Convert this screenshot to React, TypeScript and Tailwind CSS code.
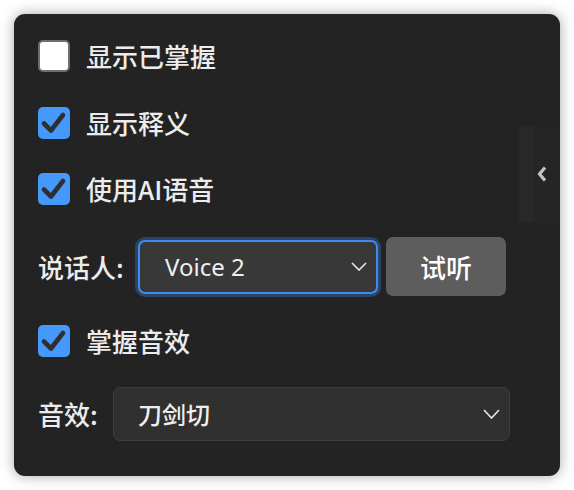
import React, { useState } from 'react';

const CheckRow = ({ label, checked }: { label: string; checked: boolean }) => (
  <label className="flex items-center gap-4 h-8">
    {checked ? (
      <span className="w-8 h-8 rounded-[5px] bg-[#4499fb] flex items-center justify-center">
        <svg width="32" height="32" viewBox="0 0 32 32">
          <polyline points="6,16.5 13,23.5 25,8" fill="none" stroke="#2f2f2f" strokeWidth="4.6" strokeLinecap="round" strokeLinejoin="round" />
        </svg>
      </span>
    ) : (
      <span className="w-8 h-8 rounded-[5px] bg-white border-2 border-[#6e6e6e]" />
    )}
    <span className="text-[26px] leading-none font-medium text-[#ececec]">{label}</span>
  </label>
);

const Chevron = ({ w, h }: { w: number; h: number }) => (
  <svg width={w} height={h} viewBox={`0 0 ${w} ${h}`}>
    <polyline points={`1,1 ${w / 2},${h - 1} ${w - 1},1`} fill="none" stroke="#e2e2e2" strokeWidth="1.7" />
  </svg>
);

export default function App() {
  const [voice] = useState('Voice 2');
  const [effect] = useState('刀剑切');

  return (
    <div className="w-[574px] h-[490px] bg-white p-[14px] font-['Noto_Sans_CJK_SC','Noto_Sans',sans-serif]">
      <div className="relative w-[546px] h-[462px] rounded-[11px] bg-[#232323] shadow-[0_0_14px_rgba(0,0,0,0.35)] pl-6 pt-[26px]">
        <CheckRow label="显示已掌握" checked={false} />
        <div className="mt-[35px]">
          <CheckRow label="显示释义" checked />
        </div>
        <div className="mt-[34px]">
          <CheckRow label="使用AI语音" checked />
        </div>

        <div className="mt-[32px] flex items-center h-[59px]">
          <span className="text-[26px] leading-none font-medium text-[#ececec] w-[100px]">说话人:</span>
          <div className="w-[240px] h-[54px] rounded-[7px] border-2 border-[#3d8bf0] ring-[3px] ring-[#2a4463] bg-[#383838] flex items-center pl-[25px] pr-[9px]">
            <span className="flex-1 text-[24px] text-[#eeeeee] font-['Noto_Sans',sans-serif]">{voice}</span>
            <Chevron w={16} h={9} />
          </div>
          <button className="ml-2 w-[120px] h-[59px] rounded-[7px] bg-[#5d5d5d] text-[26px] font-medium text-white">试听</button>
        </div>

        <div className="mt-[29px]">
          <CheckRow label="掌握音效" checked />
        </div>

        <div className="mt-[30px] flex items-center">
          <span className="text-[26px] leading-none font-medium text-[#ececec] w-[75px]">音效:</span>
          <div className="w-[397px] h-[54px] rounded-[7px] border border-[#3e3e3e] bg-[#303030] flex items-center pl-[24px] pr-[9px]">
            <span className="flex-1 text-[24px] font-medium text-[#eeeeee]">{effect}</span>
            <Chevron w={17} h={10} />
          </div>
        </div>

        <div className="absolute right-0 top-[112px] w-[42px] h-[96px] flex">
          <div className="w-4 h-full bg-[#282828]" />
          <div className="flex-1 h-full bg-[#252525] flex items-center justify-start pl-[3px]">
            <svg width="10" height="16" viewBox="0 0 10 16">
              <polyline points="8,1.5 2.5,8 8,14.5" fill="none" stroke="#c4c4c4" strokeWidth="3.2" />
            </svg>
          </div>
        </div>
      </div>
    </div>
  );
}
